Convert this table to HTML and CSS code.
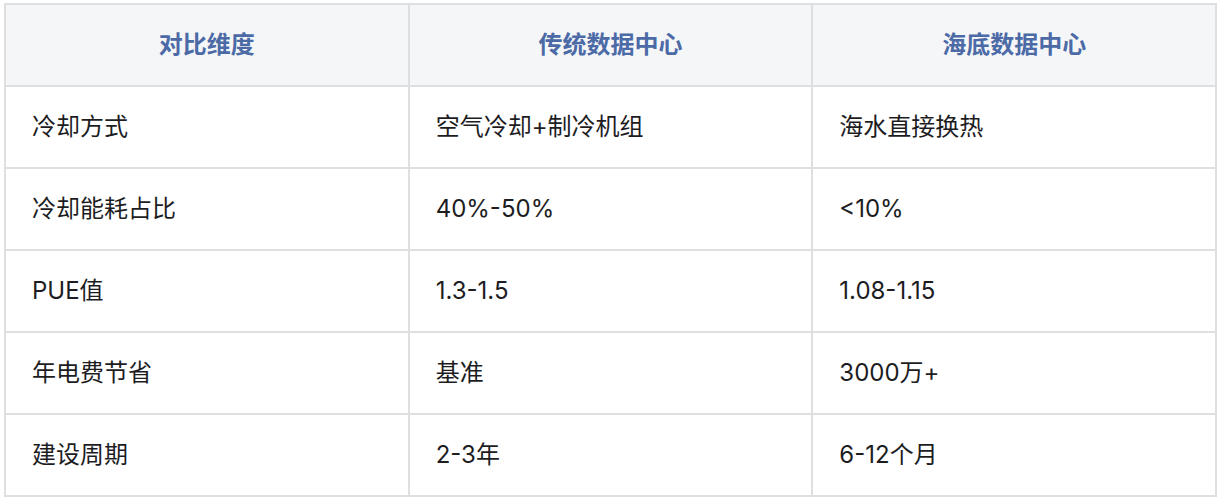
FILE: index.html
```html
<!DOCTYPE html>
<html lang="zh-CN">
<head>
<meta charset="utf-8">
<link rel="stylesheet" href="styles.css">
</head>
<body>
<table class="compare">
  <thead>
    <tr><th>对比维度</th><th>传统数据中心</th><th>海底数据中心</th></tr>
  </thead>
  <tbody>
    <tr><td>冷却方式</td><td>空气冷却+制冷机组</td><td>海水直接换热</td></tr>
    <tr><td>冷却能耗占比</td><td>40%-50%</td><td>&lt;10%</td></tr>
    <tr><td>PUE值</td><td>1.3-1.5</td><td>1.08-1.15</td></tr>
    <tr><td>年电费节省</td><td>基准</td><td>3000万+</td></tr>
    <tr><td>建设周期</td><td>2-3年</td><td>6-12个月</td></tr>
  </tbody>
</table>
</body>
</html>
```

FILE: styles.css
```css
html, body {
  margin: 0;
  padding: 0;
  background: #ffffff;
}
body {
  padding: 3px 13px 0 4px;
  font-family: "Inter", "Noto Sans CJK SC", sans-serif;
}
.compare {
  width: 100%;
  table-layout: fixed;
  border-collapse: collapse;
  border: 2px solid #dedfe1;
}
.compare th,
.compare td {
  border: 2px solid #dedfe1;
  height: 80px;
  padding: 0 26px;
  font-size: 24px;
  line-height: 1.3;
  vertical-align: middle;
}
.compare th {
  background: #f5f6f8;
  color: #4b6aa6;
  font-weight: 700;
  text-align: center;
}
.compare td {
  color: #1d1d1f;
  text-align: left;
  font-weight: 400;
}
```
